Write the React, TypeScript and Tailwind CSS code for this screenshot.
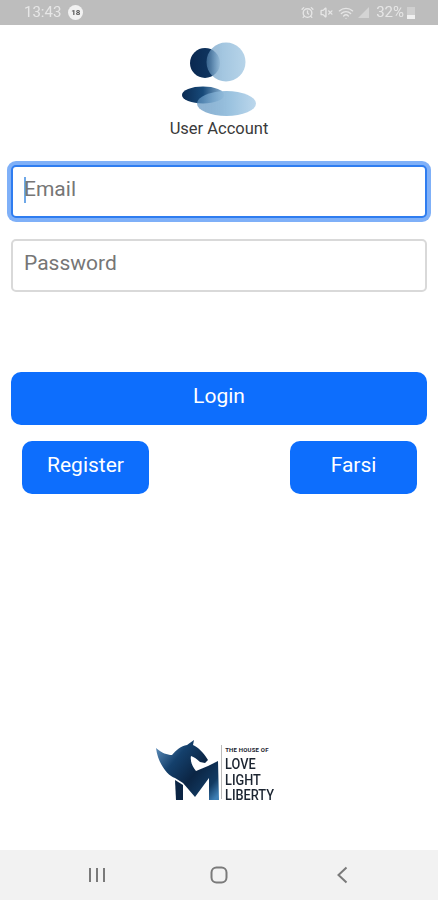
import { AlarmClock, VolumeX, Wifi } from 'lucide-react'

const uiFont = { fontFamily: 'Roboto, sans-serif' }

function StatusBar() {
  return (
    <div className="h-[25px] bg-[#bdbdbd] flex items-center justify-between pl-[24px] pr-[23px] text-[#e6e6e6] text-[15px] blur-[0.5px]">
      <div className="flex items-center gap-[7px]">
        <span>13:43</span>
        <span className="w-[15px] h-[15px] rounded-full bg-[#f2f2f2] text-[#555] text-[8px] font-bold flex items-center justify-center">18</span>
      </div>
      <div className="flex items-center">
        <AlarmClock size={13} strokeWidth={2.5} />
        <VolumeX size={13} strokeWidth={2.5} className="ml-[6px]" />
        <Wifi size={16} strokeWidth={2} className="ml-[5px]" />
        <svg className="ml-[4px]" width="11" height="11" viewBox="0 0 11 11"><path d="M0 11 L11 0 V11 Z" fill="#d4d4d4" /></svg>
        <span className="ml-[7px]">32%</span>
        <svg className="ml-[3px]" width="8" height="12" viewBox="0 0 8 12">
          <rect x="0" y="0" width="8" height="12" fill="#cfcfcf" />
          <rect x="0" y="8" width="8" height="4" fill="#f0f0f0" />
        </svg>
      </div>
    </div>
  )
}

function UserIcon() {
  return (
    <svg width="78" height="76" viewBox="0 0 78 76" className="blur-[0.7px]">
      <defs>
        <linearGradient id="darkA" x1="0" x2="1" y1="0" y2="0">
          <stop offset="0" stopColor="#0a2850" />
          <stop offset="0.7" stopColor="#0f3560" />
          <stop offset="1" stopColor="#3a6a98" />
        </linearGradient>
        <linearGradient id="darkB" x1="0" x2="1" y1="0" y2="0">
          <stop offset="0" stopColor="#0a2a52" />
          <stop offset="0.5" stopColor="#174a7a" />
          <stop offset="1" stopColor="#8fb6d6" />
        </linearGradient>
        <linearGradient id="lightA" x1="0" x2="1" y1="0" y2="0">
          <stop offset="0" stopColor="#5f90ba" stopOpacity="0.55" />
          <stop offset="0.4" stopColor="#a3c6e0" />
          <stop offset="1" stopColor="#b7d4e9" />
        </linearGradient>
        <linearGradient id="lightB" x1="0" x2="1" y1="0" y2="0">
          <stop offset="0" stopColor="#5d92bf" stopOpacity="0.7" />
          <stop offset="0.55" stopColor="#9ac2df" />
          <stop offset="1" stopColor="#bcd7ec" />
        </linearGradient>
      </defs>
      <circle cx="25" cy="21" r="15" fill="url(#darkA)" />
      <circle cx="46" cy="20" r="19.5" fill="url(#lightA)" />
      <ellipse cx="23" cy="53" rx="21" ry="8.5" fill="url(#darkB)" />
      <ellipse cx="46.5" cy="61.5" rx="29.5" ry="12.5" fill="url(#lightB)" />
    </svg>
  )
}

function BrandLogo() {
  return (
    <div className="flex items-stretch ml-[-3px]">
      <svg width="66" height="64" viewBox="0 2 66 64" className="blur-[0.3px]">
        <defs>
          <linearGradient id="mark" x1="0" x2="1" y1="0.1" y2="0.9">
            <stop offset="0" stopColor="#5f8fbc" />
            <stop offset="0.3" stopColor="#14406c" />
            <stop offset="0.6" stopColor="#0b2544" />
            <stop offset="0.85" stopColor="#123a62" />
            <stop offset="1" stopColor="#3f7fb5" />
          </linearGradient>
        </defs>
        <path d="M2 10 C8 15 13 17 18 17 C22 12 27 8 33 7 L40 2 L39 7 C44 9 50 15 54 22 L51 25 L46 24 C43 21 40 19 37 18 C36 23 38 28 42 33 L54 28 L64 23 L65 62 L55 62 L55 40 L41 59 L29 45 L21 40 C14 38 4 26 2 10 Z" fill="url(#mark)" />
        <path d="M21 42 L29 47 L29 62 L22 62 Z" fill="#0b2544" />
      </svg>
      <div className="w-px bg-[#bbb] my-[5px] mx-[1px]" />
      <div className="flex flex-col pl-[2px] text-[#1b2430] leading-none font-medium">
        <span className="text-[6px] font-bold tracking-[0.2px] mt-[7px] mb-[5px]">THE HOUSE OF</span>
        <span className="text-[14.5px] h-[15.5px] scale-x-[0.88] origin-left">LOVE</span>
        <span className="text-[14.5px] h-[15.5px] scale-x-[0.88] origin-left">LIGHT</span>
        <span className="text-[14.5px] scale-x-[0.88] origin-left">LIBERTY</span>
      </div>
    </div>
  )
}

export default function App() {
  return (
    <div className="w-[438px] h-[900px] bg-white flex flex-col overflow-hidden" style={uiFont}>
      <StatusBar />
      <div className="flex-1 flex flex-col">
        <div className="flex flex-col items-center pt-[17px]">
          <UserIcon />
          <span className="text-[16.5px] leading-[20px] text-[#3a3a3a] mt-[1px]">User Account</span>
        </div>

        <div className="px-[11px] mt-[26px] flex flex-col gap-[21px]">
          <div className="h-[53px] rounded-[5px] border-2 border-[#2f7df0] ring-[4px] ring-[#7fb0f8] bg-white flex items-center pl-[11px] pb-[3px] text-[21px] text-[#767676]">
            <span className="w-[2px] h-[26px] bg-[#6ea8e8] mr-[-2px]" />
            <span>Email</span>
          </div>
          <div className="h-[53px] rounded-[5px] border-2 border-[#d9d9d9] bg-white flex items-center pl-[11px] pb-[3px] text-[21px] text-[#767676]">
            Password
          </div>
        </div>

        <div className="px-[11px] mt-[80px]">
          <button className="w-[416px] h-[53px] rounded-[10px] bg-[#0d6efd] text-white text-[21px] pb-[3px]">Login</button>
        </div>

        <div className="flex justify-between pl-[22px] pr-[21px] mt-[16px]">
          <button className="w-[127px] h-[53px] rounded-[10px] bg-[#0d6efd] text-white text-[21px] pb-[3px]">Register</button>
          <button className="w-[127px] h-[53px] rounded-[10px] bg-[#0d6efd] text-white text-[21px] pb-[3px]">Farsi</button>
        </div>

        <div className="flex-1 flex justify-center items-end pb-[46px]">
          <BrandLogo />
        </div>
      </div>

      <div className="h-[50px] bg-[#f2f2f2] flex items-center pl-[88px] text-[#7a7a7a]">
        <svg width="18" height="16" viewBox="0 0 18 16" fill="none" stroke="currentColor" strokeWidth="2">
          <path d="M2 1v14M9 1v14M16 1v14" />
        </svg>
        <svg className="ml-[104px]" width="18" height="18" viewBox="0 0 18 18" fill="none" stroke="currentColor" strokeWidth="2">
          <rect x="1.5" y="1.5" width="15" height="15" rx="5" />
        </svg>
        <svg className="ml-[108px]" width="12" height="18" viewBox="0 0 12 18" fill="none" stroke="currentColor" strokeWidth="2">
          <path d="M10.5 1.5 L2.5 9 L10.5 16.5" />
        </svg>
      </div>
    </div>
  )
}
